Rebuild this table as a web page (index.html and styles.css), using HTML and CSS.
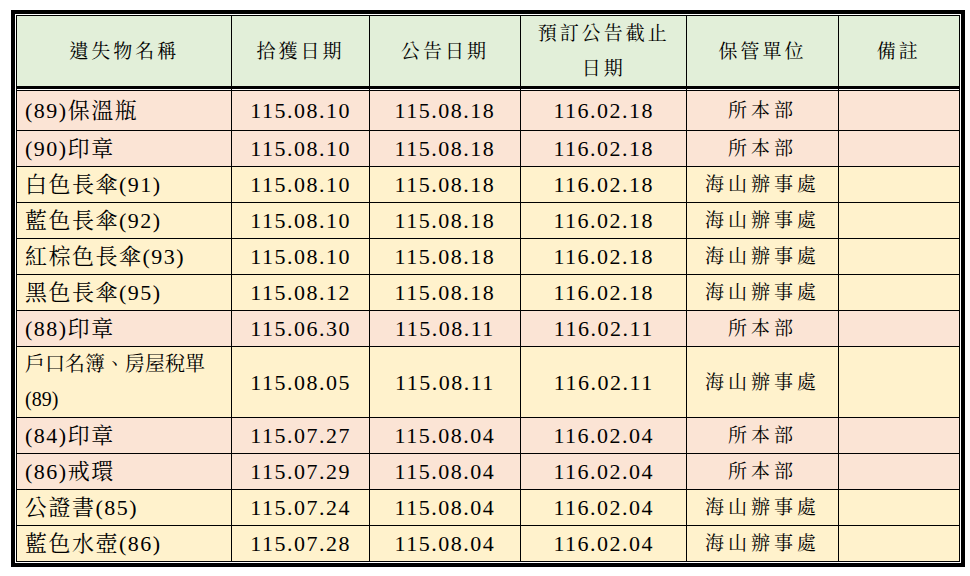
FILE: index.html
```html
<!DOCTYPE html>
<html lang="zh-Hant">
<head>
<meta charset="utf-8">
<title>遺失物招領公告</title>
<link rel="stylesheet" href="styles.css">
</head>
<body>
<div class="frame">
<table class="lost">
  <colgroup>
    <col class="c-name"><col class="c-date"><col class="c-date2"><col class="c-date3"><col class="c-unit"><col class="c-note">
  </colgroup>
  <thead>
    <tr>
      <th>遺失物名稱</th>
      <th>拾獲日期</th>
      <th>公告日期</th>
      <th>預訂公告截止<br>日期</th>
      <th>保管單位</th>
      <th>備註</th>
    </tr>
  </thead>
  <tbody>
    <tr class="pink first"><td class="name">(89)保溫瓶</td><td>115.08.10</td><td>115.08.18</td><td>116.02.18</td><td class="unit">所本部</td><td></td></tr>
    <tr class="pink"><td class="name">(90)印章</td><td>115.08.10</td><td>115.08.18</td><td>116.02.18</td><td class="unit">所本部</td><td></td></tr>
    <tr class="yellow"><td class="name">白色長傘(91)</td><td>115.08.10</td><td>115.08.18</td><td>116.02.18</td><td class="unit">海山辦事處</td><td></td></tr>
    <tr class="yellow"><td class="name">藍色長傘(92)</td><td>115.08.10</td><td>115.08.18</td><td>116.02.18</td><td class="unit">海山辦事處</td><td></td></tr>
    <tr class="yellow"><td class="name">紅棕色長傘(93)</td><td>115.08.10</td><td>115.08.18</td><td>116.02.18</td><td class="unit">海山辦事處</td><td></td></tr>
    <tr class="yellow"><td class="name">黑色長傘(95)</td><td>115.08.12</td><td>115.08.18</td><td>116.02.18</td><td class="unit">海山辦事處</td><td></td></tr>
    <tr class="pink"><td class="name">(88)印章</td><td>115.06.30</td><td>115.08.11</td><td>116.02.11</td><td class="unit">所本部</td><td></td></tr>
    <tr class="yellow"><td class="name tight">戶口名簿、房屋稅單<br>(89)</td><td>115.08.05</td><td>115.08.11</td><td>116.02.11</td><td class="unit">海山辦事處</td><td></td></tr>
    <tr class="pink"><td class="name">(84)印章</td><td>115.07.27</td><td>115.08.04</td><td>116.02.04</td><td class="unit">所本部</td><td></td></tr>
    <tr class="pink"><td class="name">(86)戒環</td><td>115.07.29</td><td>115.08.04</td><td>116.02.04</td><td class="unit">所本部</td><td></td></tr>
    <tr class="yellow"><td class="name">公證書(85)</td><td>115.07.24</td><td>115.08.04</td><td>116.02.04</td><td class="unit">海山辦事處</td><td></td></tr>
    <tr class="yellow"><td class="name">藍色水壺(86)</td><td>115.07.28</td><td>115.08.04</td><td>116.02.04</td><td class="unit">海山辦事處</td><td></td></tr>
  </tbody>
</table>
</div>
</body>
</html>
```
FILE: styles.css
```css
html, body {
  margin: 0;
  padding: 0;
  background: #ffffff;
}

body {
  font-family: "Liberation Serif", "Noto Serif CJK TC", "Noto Sans CJK TC", serif;
  color: #000;
}

.frame {
  margin: 10px 0 0 11px;
  width: 944px;
  border: 4px solid #000;
  padding: 1px;
  background: #fff;
}

.lost {
  width: 944px;
  border-collapse: collapse;
  table-layout: fixed;
  border: 1px solid #000;
}

.c-name { width: 215px; }
.c-date { width: 137px; }
.c-date2 { width: 151px; }
.c-date3 { width: 166px; }
.c-unit { width: 151px; }
.c-note { width: 121px; }

.lost th,
.lost td {
  border: 1px solid #000;
  padding: 0;
  text-align: center;
  vertical-align: middle;
}

.lost th {
  background: #e2efd9;
  font-weight: normal;
  font-size: 19px;
  letter-spacing: 3px;
  line-height: 35px;
  height: 70px;
  border-bottom: 3px solid #000;
}

.lost td {
  font-size: 22px;
  letter-spacing: 1.5px;
  line-height: 35px;
  height: 35px;
}

.lost tr.first td {
  box-shadow: inset 0 1px 0 #fff, inset 0 2px 0 #000;
  padding-top: 4px;
  padding-bottom: 2px;
}

.lost tr.pink td { background: #fbe4d5; }
.lost tr.yellow td { background: #fff2cc; }

.lost td.name {
  text-align: left;
  padding-left: 8px;
}

.lost td.name.tight {
  letter-spacing: 0;
  font-size: 20px;
}

.lost td.unit {
  font-size: 19px;
  letter-spacing: 4px;
}
```
